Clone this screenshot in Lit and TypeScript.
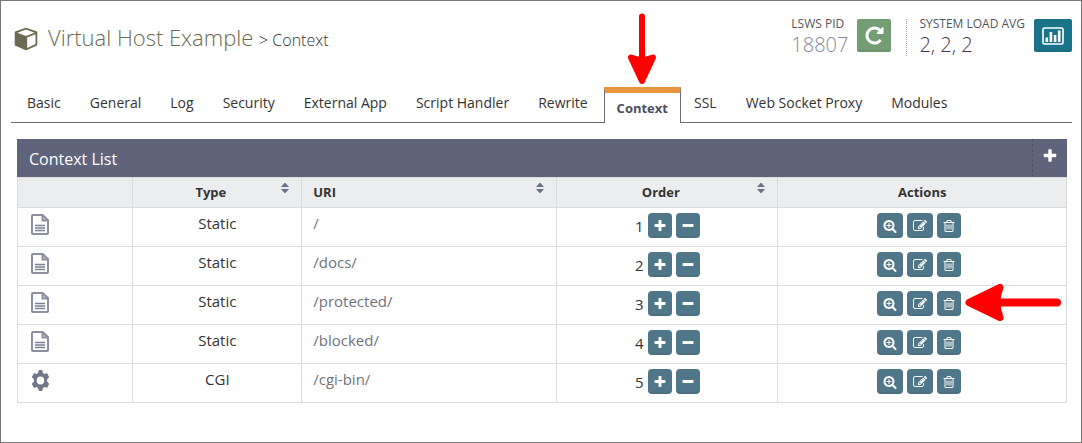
import { LitElement, html, css, svg } from "lit";
import { customElement, state } from "lit/decorators.js";
import { classMap } from "lit/directives/class-map.js";

interface ContextRow {
  kind: "file" | "gear";
  type: string;
  uri: string;
}

const TABS = [
  "Basic", "General", "Log", "Security", "External App", "Script Handler",
  "Rewrite", "Context", "SSL", "Web Socket Proxy", "Modules",
];

const ROWS: ContextRow[] = [
  { kind: "file", type: "Static", uri: "/" },
  { kind: "file", type: "Static", uri: "/docs/" },
  { kind: "file", type: "Static", uri: "/protected/" },
  { kind: "file", type: "Static", uri: "/blocked/" },
  { kind: "gear", type: "CGI", uri: "/cgi-bin/" },
];

const PATHS = {
  plus: "M1600 736v192q0 40-28 68t-68 28h-416v416q0 40-28 68t-68 28h-192q-40 0-68-28t-28-68v-416h-416q-40 0-68-28t-28-68v-192q0-40 28-68t68-28h416v-416q0-40 28-68t68-28h192q40 0 68 28t28 68v416h416q40 0 68 28t28 68z",
  minus: "M1600 736v192q0 40-28 68t-68 28h-1216q-40 0-68-28t-28-68v-192q0-40 28-68t68-28h1216q40 0 68 28t28 68z",
  repeat: "M1664 256v448q0 26-19 45t-45 19h-448q-42 0-59-40-17-39 14-69l138-138q-148-137-349-137-104 0-198.5 40.5t-163.5 109.5-109.5 163.5-40.5 198.5 40.5 198.5 109.5 163.5 163.5 109.5 198.5 40.5q119 0 225-52t179-147q7-10 23-12 15 0 25 9l137 138q9 8 9.5 20.5t-7.5 22.5q-109 132-264 204.5t-327 72.5q-156 0-298-61t-245-164-164-245-61-298 61-298 164-245 245-164 298-61q147 0 284.5 55.5t244.5 156.5l130-129q29-31 70-14 39 17 39 59z",
  zoom: "M1088 800v64q0 13-9.5 22.5t-22.5 9.5h-224v224q0 13-9.5 22.5t-22.5 9.5h-64q-13 0-22.5-9.5t-9.5-22.5v-224h-224q-13 0-22.5-9.5t-9.5-22.5v-64q0-13 9.5-22.5t22.5-9.5h224v-224q0-13 9.5-22.5t22.5-9.5h64q13 0 22.5 9.5t9.5 22.5v224h224q13 0 22.5 9.5t9.5 22.5zm128 32q0-185-131.5-316.5t-316.5-131.5-316.5 131.5-131.5 316.5 131.5 316.5 316.5 131.5 316.5-131.5 131.5-316.5zm512 832q0 53-37.5 90.5t-90.5 37.5q-54 0-90-38l-343-342q-179 124-399 124-143 0-273.5-55.5t-225-150-150-225-55.5-273.5 55.5-273.5 150-225 225-150 273.5-55.5 273.5 55.5 225 150 150 225 55.5 273.5q0 220-124 399l343 343q37 37 37 90z",
  edit: "M888 1184l116-116-152-152-116 116v56h96v96h56zm440-720q-16-16-33 1l-350 350q-17 17-1 33t33-1l350-350q17-17 1-33zm80 594v190q0 119-84.5 203.5t-203.5 84.5h-832q-119 0-203.5-84.5t-84.5-203.5v-832q0-119 84.5-203.5t203.5-84.5h832q63 0 117 25 15 7 18 23 3 17-9 29l-49 49q-14 14-32 8-23-6-45-6h-832q-66 0-113 47t-47 113v832q0 66 47 113t113 47h832q66 0 113-47t47-113v-126q0-13 9-22l64-64q15-15 35-7t20 29zm-96-738l288 288-672 672h-288v-288zm444 132l-92 92-288-288 92-92q28-28 68-28t68 28l152 152q28 28 28 68t-28 68z",
  trash: "M704 736v576q0 14-9 23t-23 9h-64q-14 0-23-9t-9-23v-576q0-14 9-23t23-9h64q14 0 23 9t9 23zm256 0v576q0 14-9 23t-23 9h-64q-14 0-23-9t-9-23v-576q0-14 9-23t23-9h64q14 0 23 9t9 23zm256 0v576q0 14-9 23t-23 9h-64q-14 0-23-9t-9-23v-576q0-14 9-23t23-9h64q14 0 23 9t9 23zm128 724v-948h-896v948q0 22 7 40.5t14.5 27 10.5 8.5h832q3 0 10.5-8.5t14.5-27 7-40.500zm-672-1076h448l-48-117q-7-9-17-11h-317q-10 2-17 11zm928 32v64q0 14-9 23t-23 9h-96v948q0 83-47 143.5t-113 60.5h-832q-66 0-113-58.5t-47-141.5v-952h-96q-14 0-23-9t-9-23v-64q0-14 9-23t23-9h309l70-167q15-37 54-63t79-26h320q40 0 79 26t54 63l70 167h309q14 0 23 9t9 23z",
};

const icon = (name: keyof typeof PATHS, size = 14) => html`
  <svg class="icon" width=${size} height=${size} viewBox="0 0 1792 1792" aria-hidden="true">
    ${svg`<path d=${PATHS[name]} fill="currentColor" />`}
  </svg>`;

const cube = html`
  <svg class="icon" width="24" height="24" viewBox="0 0 24 24" aria-hidden="true">
    <path fill="currentColor" fill-rule="evenodd"
      d="M12 .8 22.400 4.200Q23.300 4.600 23.300 5.600V17.200Q23.300 18.200 22.500 18.700L12.900 23.100Q12 23.500 11.100 23.100L1.500 18.700Q.7 18.200.7 17.200V5.600Q.7 4.600 1.600 4.200ZM12 2.600 3.300 5.700 12 9 20.700 5.700ZM13.200 20.900 21.500 17V7.300L13.200 10.500Z" />
  </svg>`;

const chart = html`
  <svg class="icon" width="22" height="18" viewBox="0 0 22 18" aria-hidden="true">
    <rect x="1" y="1" width="20" height="16" rx="1.500" fill="none" stroke="currentColor" stroke-width="1.600" />
    <path fill="currentColor" d="M3.500 10.500h2.600V15H3.500zM7.600 5h2.600v10H7.600zM11.800 8h2.600v7h-2.600zM15.900 3.500h2.600V15h-2.600z" />
  </svg>`;

const fileIcon = html`
  <svg class="icon" width="18" height="21" viewBox="0 0 18 21" aria-hidden="true">
    <path d="M2 1H11.600L17 6.200V19Q17 20 16 20H2Q1 20 1 19V2Q1 1 2 1Z" fill="none" stroke="#8b8fa0" stroke-width="2" />
    <path d="M11.300 1V6.600H17Z" fill="#b9bcc7" stroke="#8b8fa0" stroke-width="1.600" />
    <path d="M4 11.500h10M4 14h10M4 16.500h10" stroke="#7b8092" stroke-width="1.500" />
  </svg>`;

const gearIcon = html`
  <svg class="icon" width="19" height="21" viewBox="0 0 20 20" preserveAspectRatio="none" aria-hidden="true">
    <path fill="#737889" fill-rule="evenodd"
      d="M7.900.8Q8 .1 8.700.1h2.600q.7 0 .8.700l.4 2.100 1.800 1 2-.7q.7-.2 1 .4l1.500 2.600q.4.600-.2 1.100L17 8.900v2.200l1.600 1.600q.6.500.2 1.100l-1.500 2.600q-.3.600-1 .4l-2-.7-1.800 1-.4 2.100q-.1.700-.8.700H8.700q-.7 0-.8-.7l-.4-2.100-1.800-1-2 .7q-.7.200-1-.4l-1.500-2.600q-.4-.6.200-1.100L3 11.100V8.900L1.400 7.300q-.6-.5-.2-1.100l1.500-2.600q.3-.6 1-.4l2 .7 1.800-1ZM10 6.100a3.900 3.900 0 1 0 0 7.800 3.900 3.900 0 1 0 0-7.800Z" />
  </svg>`;

const sortIcon = html`
  <svg class="sort-icon" width="10" height="12" viewBox="0 0 10 12" aria-hidden="true">
    <path fill="#6c7086" d="M5 .5 9 5H1ZM1 7h8L5 11.500Z" />
  </svg>`;

@customElement("app-root")
export class AppRoot extends LitElement {
  @state() private active = "Context";

  static styles = css`
    :host {
      display: block;
      box-sizing: border-box;
      min-height: 100vh;
      border: 1px solid #7b7878;
      background: #fff;
      color: #333;
      font-family: "Open Sans", sans-serif;
      font-size: 15px;
      line-height: 20px;
      position: relative;
    }
    *, *::before, *::after { box-sizing: border-box; }
    a { color: inherit; text-decoration: none; }
    button { margin: 0; padding: 0; border: 0; font: inherit; color: inherit; cursor: pointer; }
    .icon { display: block; flex: none; }

    .top {
      display: flex;
      justify-content: space-between;
      align-items: flex-start;
      padding: 15px 9px 0 13px;
    }
    .title {
      display: flex;
      align-items: center;
      gap: 10px;
      margin: 0;
      padding-top: 4px;
      color: #6a6b50;
      font-size: 22px;
      font-weight: 300;
      line-height: 34px;
      white-space: nowrap;
    }
    .crumb { color: #333; font-size: 16px; }
    .stats { display: flex; padding-top: 3px; }
    .stat { display: flex; align-items: flex-start; gap: 9px; }
    .stat + .stat { margin-left: 15px; padding-left: 12px; border-left: 1px dotted #aaa; }
    .stat-text { display: flex; flex-direction: column; margin: -3px 0 -2px; }
    .stat-name { font-size: 12px; line-height: 16px; color: #555; text-transform: uppercase; }
    .stat-value { font-size: 20px; line-height: 26px; font-weight: 300; color: #4a3352; }
    .stat-value.muted { color: #858b96; }
    .square {
      display: flex;
      align-items: center;
      justify-content: center;
      width: 34px;
      height: 33px;
      border-radius: 2px;
      color: #fff;
      background: #739e73;
      box-shadow: inset 0 -2px 0 rgba(0, 0, 0, 0.05);
    }
    .square.teal { width: 38px; background: #1a7489; }

    .tabs {
      display: flex;
      align-items: flex-end;
      gap: 3px;
      margin: 29px 9px 0 10px;
      padding-left: 3px;
      border-bottom: 1px solid #6b6b80;
    }
    .tab {
      padding: 7px 13px 9px;
      font-size: 14px;
      line-height: 20px;
      color: #333;
      white-space: nowrap;
    }
    .tab.active {
      margin-bottom: -1px;
      margin-right: -3px;
      padding: 5px 12px 5px;
      border: 1px solid #6b6b80;
      border-top: 6px solid #e8953f;
      border-bottom: 0;
      background: #fff;
      color: #4c4f60;
      font-size: 13px;
      font-weight: 700;
    }

    .panel { margin: 16px 14px 0 16px; }
    .panel-head {
      display: flex;
      justify-content: space-between;
      align-items: stretch;
      height: 38px;
      padding-left: 12px;
      background: #60637c;
      color: #fff;
    }
    .panel-title { margin: 0; font-size: 16px; font-weight: 400; line-height: 40px; }
    .add {
      display: flex;
      justify-content: center;
      width: 35px;
      padding-top: 9px;
      border-left: 1px dashed #4f526c;
      background: none;
      color: #fff;
    }

    .grid { width: 100%; border-collapse: collapse; table-layout: fixed; }
    .col-icon { width: 11%; }
    .col-type { width: 16.1%; }
    .col-uri { width: 24.3%; }
    .col-order { width: 21.1%; }
    .grid th, .grid td { border: 1px solid #dcdcdc; vertical-align: top; }
    .grid th {
      height: 30px;
      padding: 4px 11px 5px;
      background: #ecedef;
      font-size: 13px;
      font-weight: 700;
      text-align: center;
    }
    .grid td { height: 39px; padding: 5px 11px 0; text-align: center; }
    .grid .kind { padding: 6px 13px 0; text-align: left; }
    .grid .uri { text-align: left; color: #70737d; }
    .grid .actions { padding-right: 17px; }
    .sort { display: flex; width: 100%; gap: 3px; background: none; }
    .sort-label { flex: 1; text-align: center; }
    .sort-label.start { text-align: left; }
    .sort-icon { flex: none; }
    .tools { display: flex; justify-content: center; align-items: center; gap: 4px; }
    .btn {
      display: flex;
      align-items: center;
      justify-content: center;
      width: 24px;
      height: 25px;
      border-radius: 4px;
      background: #4f7789;
      box-shadow: inset 0 -2px 0 rgba(0, 0, 0, 0.05);
      color: #fff;
    }
    .btn.wide { width: 26px; }

    .arrow { position: absolute; pointer-events: none; }
    .arrow-tab { left: 626px; top: 11px; }
    .arrow-trash { left: 963px; top: 281px; }
  `;

  private sortHead(label: string, start = false) {
    return html`<th scope="col">
      <button class="sort" type="button">
        <span class=${classMap({ "sort-label": true, start })}>${label}</span>${sortIcon}
      </button>
    </th>`;
  }

  private row(r: ContextRow, i: number) {
    return html`<tr>
      <td class="kind">${r.kind === "file" ? fileIcon : gearIcon}</td>
      <td>${r.type}</td>
      <td class="uri"><a href="#">${r.uri}</a></td>
      <td>
        <div class="tools">
          <span>${i + 1}</span>
          <button class="btn" type="button" aria-label="Move ${r.uri} down">${icon("plus")}</button>
          <button class="btn" type="button" aria-label="Move ${r.uri} up">${icon("minus")}</button>
        </div>
      </td>
      <td class="actions">
        <div class="tools">
          <button class="btn wide" type="button" aria-label="View ${r.uri}">${icon("zoom")}</button>
          <button class="btn wide" type="button" aria-label="Edit ${r.uri}">${icon("edit")}</button>
          <button class="btn" type="button" aria-label="Delete ${r.uri}">${icon("trash")}</button>
        </div>
      </td>
    </tr>`;
  }

  render() {
    return html`
      <header class="top">
        <h1 class="title">
          ${cube}
          <span>Virtual Host Example <span class="crumb">&gt; Context</span></span>
        </h1>
        <div class="stats">
          <div class="stat">
            <div class="stat-text">
              <span class="stat-name">LSWS PID</span>
              <span class="stat-value muted">18807</span>
            </div>
            <button class="square" type="button" aria-label="Restart">${icon("repeat", 21)}</button>
          </div>
          <div class="stat">
            <div class="stat-text">
              <span class="stat-name">System Load Avg</span>
              <span class="stat-value">2, 2, 2</span>
            </div>
            <button class="square teal" type="button" aria-label="Statistics">${chart}</button>
          </div>
        </div>
      </header>

      <nav class="tabs">
        ${TABS.map((t) => html`<a
          class=${classMap({ tab: true, active: t === this.active })}
          href="#"
          @click=${(e: Event) => { e.preventDefault(); this.active = t; }}
        >${t}</a>`)}
      </nav>

      <section class="panel">
        <div class="panel-head">
          <h2 class="panel-title">Context List</h2>
          <button class="add" type="button" aria-label="Add context">${icon("plus", 16)}</button>
        </div>
        <table class="grid">
          <colgroup>
            <col class="col-icon" /><col class="col-type" /><col class="col-uri" />
            <col class="col-order" /><col />
          </colgroup>
          <thead>
            <tr>
              <th></th>
              ${this.sortHead("Type")}
              ${this.sortHead("URI", true)}
              ${this.sortHead("Order")}
              <th scope="col">Actions</th>
            </tr>
          </thead>
          <tbody>${ROWS.map((r, i) => this.row(r, i))}</tbody>
        </table>
      </section>

      <svg class="arrow arrow-tab" width="30" height="74" viewBox="0 0 30 74" aria-hidden="true">
        <path d="M15 4.500V50" stroke="#f00" stroke-width="6" stroke-linecap="round" />
        <path d="M4 45.500Q15 50 26 45.500L15 69Z" fill="#f00" stroke="#f00" stroke-width="6" stroke-linejoin="round" />
      </svg>
      <svg class="arrow arrow-trash" width="100" height="42" viewBox="0 0 100 42" aria-hidden="true">
        <path d="M93 20.500H32" stroke="#f00" stroke-width="8" stroke-linecap="round" />
        <path d="M36 5.500Q30 20.500 36 35.500L5 20.500Z" fill="#f00" stroke="#f00" stroke-width="7" stroke-linejoin="round" />
      </svg>
    `;
  }
}
